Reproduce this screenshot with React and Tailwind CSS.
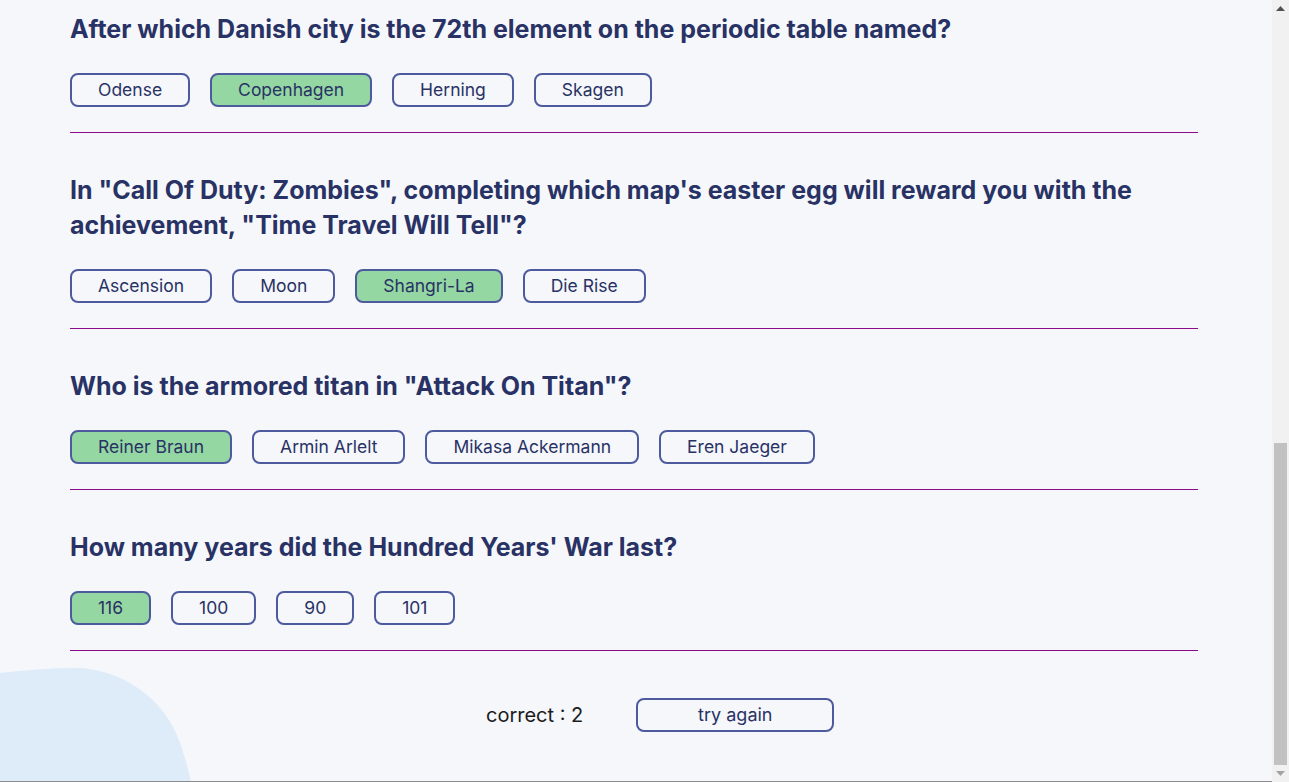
const questions = [
  {
    text: "After which Danish city is the 72th element on the periodic table named?",
    answers: ["Odense", "Copenhagen", "Herning", "Skagen"],
    picked: "Copenhagen",
  },
  {
    text: 'In "Call Of Duty: Zombies", completing which map\'s easter egg will reward you with the achievement, "Time Travel Will Tell"?',
    answers: ["Ascension", "Moon", "Shangri-La", "Die Rise"],
    picked: "Shangri-La",
  },
  {
    text: 'Who is the armored titan in "Attack On Titan"?',
    answers: ["Reiner Braun", "Armin Arlelt", "Mikasa Ackermann", "Eren Jaeger"],
    picked: "Reiner Braun",
  },
  {
    text: "How many years did the Hundred Years' War last?",
    answers: ["116", "100", "90", "101"],
    picked: "116",
  },
];

function Question({ q, first }) {
  return (
    <section className={`${first ? "pt-[12px]" : "pt-[40px]"} pb-[25px] border-b border-[#8a0a8a]`}>
      <h2 className="text-[25px] leading-[35px] font-bold text-[#293264]">{q.text}</h2>
      <div className="mt-[26px] flex gap-[20px]">
        {q.answers.map((a) => (
          <button
            key={a}
            className={`h-[34px] px-[26px] rounded-lg border-2 border-[#4D5B9E] text-[17.5px] leading-[22px] text-[#293264] ${
              a === q.picked ? "bg-[#94D7A2]" : "bg-transparent"
            }`}
          >
            {a}
          </button>
        ))}
      </div>
    </section>
  );
}

export default function App() {
  return (
    <div className="flex h-[782px] w-full overflow-hidden bg-[#F5F7FB] font-['Inter',sans-serif]">
      <main className="relative flex-1">
        <svg className="absolute bottom-0 left-0" width="200" height="114" viewBox="0 0 200 114">
          <path d="M0 5 C25 2 50 0 75 0 C120 0 165 30 180 75 C186 92 189 105 191 114 L0 114 Z" fill="#DEEBF8" />
        </svg>
        <div className="relative w-[1128px] ml-[70px]">
          {questions.map((q, i) => (
            <Question key={i} q={q} first={i === 0} />
          ))}
          <div className="mt-[47px] flex items-center pl-[416px] gap-[53px]">
            <span className="text-[20px] text-[#1b1b1b]">correct : 2</span>
            <button className="w-[198px] h-[34px] rounded-lg border-2 border-[#4D5B9E] text-[18px] leading-[22px] text-[#293264]">
              try again
            </button>
          </div>
        </div>
        <div className="absolute bottom-0 left-0 right-0 h-px bg-[#8c8c8c]" />
      </main>
      <div className="flex w-[17px] flex-col bg-[#f1f1f1]">
        <div className="flex h-[17px] items-center justify-center">
          <svg width="9" height="5" viewBox="0 0 9 5"><path d="M4.5 0 L9 5 L0 5 Z" fill="#505050" /></svg>
        </div>
        <div className="flex-1 flex flex-col px-[2px] pt-[426px]">
          <div className="flex-1 bg-[#c1c1c1]" />
        </div>
        <div className="flex h-[17px] items-center justify-center">
          <svg width="9" height="5" viewBox="0 0 9 5"><path d="M0 0 L9 0 L4.5 5 Z" fill="#a3a3a3" /></svg>
        </div>
      </div>
    </div>
  );
}
